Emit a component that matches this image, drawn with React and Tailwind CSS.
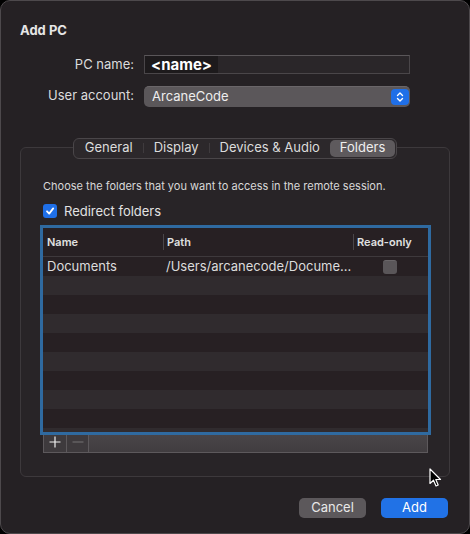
import React from 'react';

const FONT = { fontFamily: 'Inter, "Liberation Sans", sans-serif' };

const ROWS = [
  { name: 'Documents', path: '/Users/arcanecode/Docume...', ro: true },
  {}, {}, {}, {}, {}, {}, {}, {}, {},
];

function Stepper() {
  return (
    <div className="w-[18px] h-[16px] rounded-[4px] bg-[#1f6fe8] flex items-center justify-center">
      <svg width="10" height="12" viewBox="0 0 10 12" fill="none" stroke="white" strokeWidth="1.4" strokeLinecap="round" strokeLinejoin="round">
        <path d="M2.5 4.5 L5 2 L7.5 4.5" />
        <path d="M2.5 7.5 L5 10 L7.5 7.5" />
      </svg>
    </div>
  );
}

function Tabs() {
  const tabs = ['General', 'Display', 'Devices & Audio', 'Folders'];
  return (
    <div className="flex h-[21px] rounded-[6px] border border-[#4a4649] bg-[#2c282b] p-[1px] text-[13px] text-[#dcdcdc]">
      {tabs.map((t, i) => {
        const active = t === 'Folders';
        return (
          <div key={t} className="flex items-center">
            {i > 0 && !active && <div className="w-px h-[10px] bg-[#3f3b3e]" />}
            <div
              className={
                active
                  ? 'h-[17px] px-[10px] rounded-[5px] bg-[#5e5a5d] text-[#eeeeee] flex items-center'
                  : 'h-[17px] px-[10px] flex items-center'
              }
            >
              {t}
            </div>
          </div>
        );
      })}
    </div>
  );
}

function Cursor() {
  return (
    <svg width="14" height="20" viewBox="0 0 14 20" className="absolute left-[428px] top-[467px]">
      <path d="M1 1 L1 15.5 L4.5 12.2 L7 18 L9.2 17 L6.8 11.5 L11.5 11.5 Z" fill="black" stroke="white" strokeWidth="1.2" strokeLinejoin="round" />
    </svg>
  );
}

export default function App() {
  return (
    <div className="w-[470px] h-[534px] bg-black" style={FONT}>
      <div className="relative w-[470px] h-[534px] rounded-[10px] border border-[#4d494c] bg-[#252124] flex flex-col overflow-hidden">
        <div className="pl-[19px] pt-[21px] text-[13px] font-bold text-[#e6e6e6] leading-[16px]">Add PC</div>

        {/* form */}
        <div className="mt-[17px] flex flex-col gap-[11px]">
          <div className="flex items-center">
            <div className="w-[143px] pr-[10px] text-right text-[13px] text-[#dcdcdc]">PC name:</div>
            <div className="w-[266px] h-[19px] border border-[#4a4649] border-t-[#5a5659] bg-[#2a2629] flex items-center">
              <span className="h-[17px] px-[6px] bg-[#1d1a1c] text-[15px] font-bold text-white leading-[17px]">&lt;name&gt;</span>
            </div>
          </div>
          <div className="flex items-center">
            <div className="w-[143px] pr-[10px] text-right text-[13px] text-[#dcdcdc]">User account:</div>
            <div className="w-[266px] h-[21px] rounded-[5px] bg-[#5b575a] border-t border-[#6a6669] flex items-center justify-between pl-[8px] pr-[1px]">
              <span className="text-[13px] text-[#eeeeee]">ArcaneCode</span>
              <Stepper />
            </div>
          </div>
        </div>

        {/* group box with tabs */}
        <div className="relative mt-[31px] mx-[19px]">
          <div className="absolute left-0 right-0 top-0 flex justify-center z-10">
            <Tabs />
          </div>
          <div className="mt-[9px] h-[330px] rounded-[6px] border border-[#3d393c] bg-[#282427] flex flex-col px-[22px]">
            <div className="mt-[31px] text-[11px] text-[#d8d8d8] leading-[14px]">
              Choose the folders that you want to access in the remote session.
            </div>
            <div className="mt-[9px] flex items-center gap-[7px]">
              <div className="w-[14px] h-[14px] rounded-[3px] bg-[#1f6fe8] flex items-center justify-center">
                <svg width="10" height="10" viewBox="0 0 10 10" fill="none" stroke="white" strokeWidth="1.8" strokeLinecap="round" strokeLinejoin="round">
                  <path d="M2 5.3 L4.2 7.6 L8.2 2.4" />
                </svg>
              </div>
              <span className="text-[13px] text-[#e2e2e2]">Redirect folders</span>
            </div>

            {/* table */}
            <div className="mt-[7px] w-[385px] flex flex-col">
              <div className="relative w-[385px] h-[204px] bg-[#272023] outline-[3px] outline-solid outline-[#2f6aa0] overflow-hidden">
                <div className="h-[29px] border-b border-[#3e393c] flex items-center text-[11px] font-semibold text-[#e0e0e0]">
                  <div className="w-[120px] pl-[4px]">Name</div>
                  <div className="w-[190px] h-[16px] border-l border-[#4a4649] pl-[3px] flex items-center">Path</div>
                  <div className="flex-1 h-[16px] border-l border-[#4a4649] pl-[3px] flex items-center">Read-only</div>
                </div>
                {ROWS.map((r, i) => (
                  <div
                    key={i}
                    className={
                      i % 2 === 0
                        ? 'h-[19px] bg-[#272023] flex items-center text-[13px] text-[#dcdcdc]'
                        : 'h-[19px] bg-[#302b2e] flex items-center text-[13px] text-[#dcdcdc]'
                    }
                  >
                    {r.name && (
                      <>
                        <div className="w-[120px] pl-[4px]">{r.name}</div>
                        <div className="w-[190px] pl-[3px]">{r.path}</div>
                        <div className="flex-1 flex justify-center pr-[2px]">
                          <div className="w-[14px] h-[14px] rounded-[3px] bg-[#5a5659] border-t border-[#6a6669]" />
                        </div>
                      </>
                    )}
                  </div>
                ))}
              </div>
              <div className="h-[21px] flex border border-t-0 border-[#5d595c] bg-[#47434a]">
                <div className="w-[23px] bg-[#3e3a3d] border-r border-[#5d595c] flex items-center justify-center">
                  <svg width="12" height="12" viewBox="0 0 12 12" stroke="#f0f0f0" strokeWidth="1.2">
                    <path d="M6 0.5 V11.5 M0.5 6 H11.5" />
                  </svg>
                </div>
                <div className="w-[22px] bg-[#3e3a3d] border-r border-[#5d595c] flex items-center justify-center">
                  <svg width="12" height="12" viewBox="0 0 12 12" stroke="#6d696c" strokeWidth="1.2">
                    <path d="M0.5 6 H11.5" />
                  </svg>
                </div>
                <div className="flex-1 bg-gradient-to-b from-[#4a4649] to-[#413d40]" />
              </div>
            </div>
          </div>
        </div>

        {/* buttons */}
        <div className="mt-[21px] flex justify-end gap-[15px] pr-[21px]">
          <div className="w-[67px] h-[20px] rounded-[5px] bg-[#5c585b] flex items-center justify-center text-[13px] text-[#e8e8e8]">Cancel</div>
          <div className="w-[67px] h-[20px] rounded-[5px] bg-[#2172e6] flex items-center justify-center text-[13px] text-white">Add</div>
        </div>

        <Cursor />
      </div>
    </div>
  );
}
